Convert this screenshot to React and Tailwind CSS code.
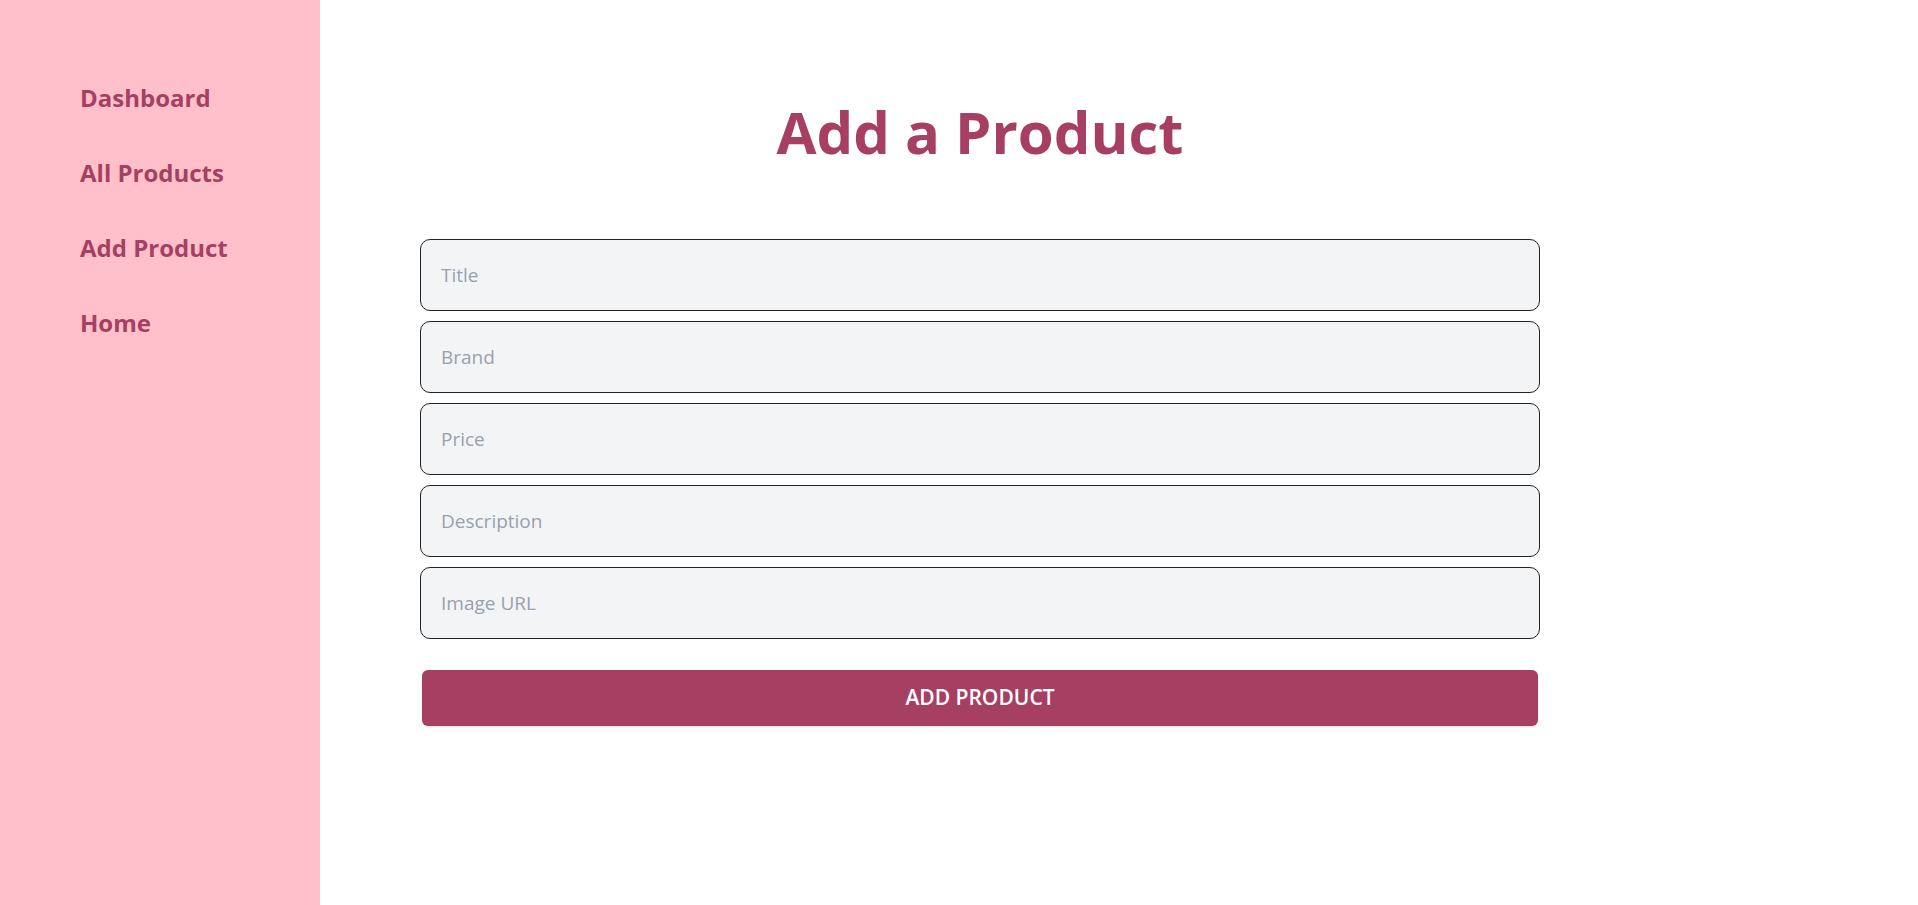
import { useState } from 'react';

const fields = [
  { name: 'title', placeholder: 'Title' },
  { name: 'brand', placeholder: 'Brand' },
  { name: 'price', placeholder: 'Price' },
  { name: 'description', placeholder: 'Description' },
  { name: 'image', placeholder: 'Image URL' },
];

function Sidebar() {
  const links = ['Dashboard', 'All Products', 'Add Product', 'Home'];
  return (
    <aside className="w-[320px] shrink-0 bg-[#ffc0cb] min-h-screen">
      <ul className="flex flex-col gap-[43px] pl-[80px] pt-[82px]">
        {links.map((label) => (
          <li key={label}>
            <a href="#" className="text-2xl leading-8 font-bold text-[#a63f62]">
              {label}
            </a>
          </li>
        ))}
      </ul>
    </aside>
  );
}

export default function App() {
  const [form, setForm] = useState({});

  const handleChange = (e) => {
    setForm({ ...form, [e.target.name]: e.target.value });
  };

  return (
    <div className="flex min-h-screen bg-white font-['Open_Sans',sans-serif]">
      <Sidebar />
      <main className="flex-1">
        <div className="ml-[100px] w-[1120px] pt-[102px]">
          <h1 className="text-center text-[58px] leading-[60px] font-bold text-[#a63f62]">Add a Product</h1>
          <form className="mt-[77px] flex flex-col" onSubmit={(e) => e.preventDefault()}>
            <div className="flex flex-col gap-[10px]">
              {fields.map((f) => (
                <input
                  key={f.name}
                  name={f.name}
                  value={form[f.name] || ''}
                  onChange={handleChange}
                  placeholder={f.placeholder}
                  className="h-[72px] w-full rounded-[10px] border border-[#222] bg-gray-100 px-5 text-[19px] text-gray-700 placeholder:text-gray-400 outline-none"
                />
              ))}
            </div>
            <button
              type="submit"
              className="mx-[2px] mt-[31px] h-[56px] rounded-md bg-[#a63f62] text-[21px] font-semibold text-white shadow-sm"
            >
              ADD PRODUCT
            </button>
          </form>
        </div>
      </main>
    </div>
  );
}
